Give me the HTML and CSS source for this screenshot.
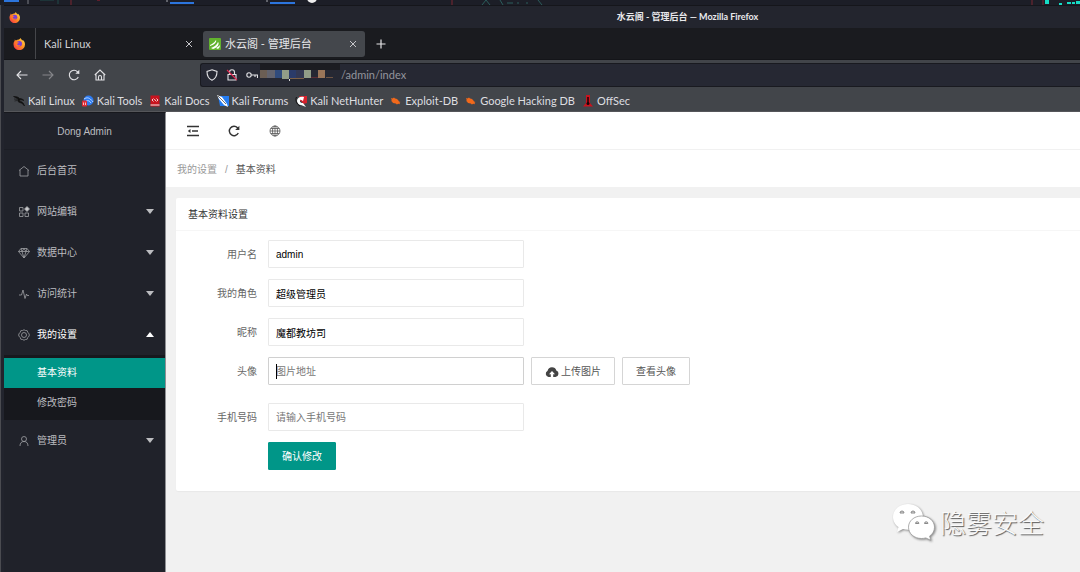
FILE: index.html
```html
<!DOCTYPE html>
<html lang="zh">
<head>
<meta charset="utf-8">
<title>水云阁 - 管理后台</title>
<link rel="stylesheet" href="styles.css">
</head>
<body>
<svg width="0" height="0" class="defs">
  <defs>
    <linearGradient id="fox" x1="1" y1="0" x2="0" y2="1">
      <stop offset="0" stop-color="#ffe14a"/>
      <stop offset=".5" stop-color="#ff8a22"/>
      <stop offset="1" stop-color="#f5264f"/>
    </linearGradient>
    <symbol id="firefox" viewBox="0 0 12 12">
      <path d="M6 1.6C7 .8 7 .5 7.4 0c.5 1.400 1.600 1.700 2.400 2.800 0-.5 0-.7-.2-1.100C11.200 2.900 12 4.600 12 6.400A5.700 5.700 0 0 1 .5 6.400C.5 4.600 1 3.600 1.600 2.900l.2-1.300 1 1C3.900 1.900 5 1.600 6 1.600z" fill="url(#fox)"/>
      <circle cx="6.300" cy="5.800" r="2.700" fill="#7a3fd6"/>
      <path d="M2.500 4.200c1.200-.6 2.300.1 3.500.2-.3.9-1.600.9-1.800 1.600 0 1 1.200 1.900 3.300.7-.5 1.600-2.500 2.200-4 1.200-1-.8-1.400-2.200-1-3.700z" fill="#ff7a2a"/>
    </symbol>
    <symbol id="bug" viewBox="0 0 12 12">
      <path d="M1 3l1.500.5L4 2.500l1 1C7 3.500 8.500 5 9 6.500l1.500.5-1 .8.5 1.400-1.800-.5-1.300.8L5.800 8.500C3.500 8.500 2.300 7.500 2 6.500L1 6l.8-.8z" fill="#f2691b"/>
    </symbol>
    <symbol id="close" viewBox="0 0 8 8"><path d="M1 1l6 6M7 1L1 7" stroke="#c6c6ca" fill="none"/></symbol>
  </defs>
</svg>

<div class="desktop">
  <svg class="panel" width="1080" height="5">
    <rect x="4" width="15" height="2" fill="#2c75dd"/>
    <path d="M28 0v4" stroke="#7a7d84"/>
    <path d="M58 0v4M40 0h14" stroke="#1e4a4b"/>
    <path d="M71 0v5M452 0v5M1032 0v5M1043 0v5" stroke="#4b222c" stroke-width="2"/>
    <path d="M97 0h3" stroke="#a21f30"/>
    <path d="M167 0v2M267 0v2" stroke="#a5a7ad"/>
    <path d="M170 3h24M270 3h25" stroke="#2c75dd" stroke-width="2"/>
    <circle cx="312" cy="-2" r="5" fill="#eee"/>
    <path d="M482 5l4-5 4 5M500 0l3 5M507 3h6M517 3h2M526 3h2M538 0l4 5" stroke="#2b5c5c" fill="none"/>
    <path d="M1045 0h4v4h-4zM1059 3h3v2h-3zM1067 2h4v2h-4zM1072 2h3v2h-3zM1076 1h4v3h-4z" fill="#16dcc5"/>
  </svg>

  <div class="window">
    <header class="titlebar">
      <svg width="11" height="11"><use href="#firefox"/></svg>
      <span class="window-title">水云阁 - 管理后台 — Mozilla Firefox</span>
    </header>

    <div class="tabs">
      <div class="tab-pinned"><svg width="12" height="12"><use href="#firefox"/></svg></div>
      <div class="tab">
        <span>Kali Linux</span>
        <button class="tab-close" aria-label="Close"><svg width="8" height="8"><use href="#close"/></svg></button>
      </div>
      <div class="tab active">
        <svg width="12" height="12" viewBox="0 0 12 12"><rect width="12" height="12" rx="1" fill="#62b32e"/><path d="M1 7c2-1 4-2 6-5 1 2-2 5-6 6zM2 10c3-1 6-3 7-6 2 2-1 6-5 7zM7 10c2-1 3-2 4-3 0 2-1 3-2 4z" fill="#fff"/></svg>
        <span>水云阁 - 管理后台</span>
        <button class="tab-close" aria-label="Close"><svg width="8" height="8"><use href="#close"/></svg></button>
      </div>
      <button class="tab-new" aria-label="New tab"><svg width="10" height="10" viewBox="0 0 10 10"><path d="M5 .5v9M.5 5h9" stroke="#e6e6e8" stroke-width="1.200"/></svg></button>
    </div>

    <div class="navbar">
      <button class="nav-btn" aria-label="Back"><svg width="12" height="12" viewBox="0 0 12 12"><path d="M11.500 6H1M5 2L1 6l4 4"/></svg></button>
      <button class="nav-btn dim" aria-label="Forward"><svg width="12" height="12" viewBox="0 0 12 12"><path d="M.5 6H11M7 2l4 4-4 4"/></svg></button>
      <button class="nav-btn" aria-label="Reload"><svg width="12" height="12" viewBox="0 0 12 12"><path d="M10.300 8A4.700 4.700 0 1 1 9.500 2.800L11 4.500"/><path d="M11.300 .8v4h-4z" fill="#e2e2e5" stroke="none"/></svg></button>
      <button class="nav-btn" aria-label="Home"><svg width="12" height="12" viewBox="0 0 12 12"><path d="M.8 6L6 1l5.200 5M2 5.500V11h8V5.500M4.500 11V8a1.500 1.500 0 0 1 3 0v3"/></svg></button>
      <div class="urlbar">
        <svg width="12" height="12" viewBox="0 0 12 12"><path d="M6 .8L11 2.500C11 7 9 10 6 11.300 3 10 1 7 1 2.500z"/></svg>
        <svg width="12" height="12" viewBox="0 0 12 12"><path d="M2 5.500h8V11H2zM3.500 5.500V3.300a2.500 2.500 0 0 1 5 0v2.200"/><path d="M1 1l10 10" stroke="#e22850"/></svg>
        <svg width="12" height="12" viewBox="0 0 12 12"><circle cx="3" cy="6" r="2.200"/><path d="M5.200 6H12M9 6v2M11.500 6v3"/></svg>
        <svg class="mosaic" width="80" height="22" viewBox="0 0 80 22">
          <path d="M0 0h80v6H0z" fill="#1b1c21" stroke="none"/>
          <g stroke="none">
            <rect y="6" width="7" height="8" fill="#6b5e54"/>
            <rect x="7" y="6" width="8" height="8" fill="#62636e"/>
            <rect x="15" y="6" width="7" height="8" fill="#304b7c"/>
            <rect x="22" y="6" width="7" height="9" fill="#929d88"/>
            <rect x="29" y="6" width="7" height="8" fill="#2b3b69"/>
            <rect x="36" y="6" width="8" height="8" fill="#333853"/>
            <rect x="44" y="6" width="7" height="8" fill="#929d88"/>
            <rect x="51" y="13" width="7" height="1" fill="#5c2d35"/>
            <rect x="58" y="6" width="7" height="8" fill="#9b7659"/>
            <rect x="66" y="13" width="7" height="1" fill="#6e5443"/>
            <rect x="30" y="14" width="14" height="1" fill="#7d6046"/>
            <rect x="29" y="15" width="1" height="2" fill="#ddd"/>
          </g>
        </svg>
        <input class="url" type="text" aria-label="Address" value="/admin/index">
      </div>
    </div>

    <nav class="bookmarks">
      <a href="#"><svg width="12" height="12" viewBox="0 0 12 12"><path d="M.5 1.500c3 0 5 .5 6 2 2 0 3 .5 4.500 2L9 5c-2-.5-3 .3-2 1.200C9 6.500 10.500 7.500 11.500 11 9.500 8 8 8 6 7.300 4.500 6.500 4.500 5 5 4 3.500 3 2 2.500.5 1.500zM1 4l3 .3M1.500 6L4 5.500" fill="#111" stroke="#111" stroke-width=".6"/></svg>Kali Linux</a>
      <a href="#"><svg width="12" height="12" viewBox="0 0 12 12"><circle cx="6.500" cy="5.500" r="5" fill="#2e7bf0"/><path d="M2 4c3-2 5-1 6 0s2 1 3 3M4 6c2-1 4 0 5 2" stroke="#b9d6ff" fill="none"/><rect y="5.500" width="5" height="6" rx="1" fill="#e02b35"/><path d="M1.500 7.500v2.500M3.500 7.500v2.500" stroke="#fff" stroke-width=".7"/></svg>Kali Tools</a>
      <a href="#"><svg width="12" height="12" viewBox="0 0 12 12"><path d="M1.500 .5h9v11h-9z" fill="#c9131e"/><path d="M1.500 10h9" stroke="#eee"/><path d="M4.500 3.500L3 5l1.500 1.500M7.500 3.500L9 5 7.500 6.500M5.300 4l1.500 2" stroke="#fff" fill="none" stroke-width=".8"/></svg>Kali Docs</a>
      <a href="#"><svg width="12" height="12" viewBox="0 0 12 12"><path d="M1 1h11v10H3z" fill="#257df2"/><path d="M0 0l5 2 5 7 1 3-4-2-5-6z" fill="#fff"/><path d="M1 1l8 8" stroke="#333" stroke-width=".7"/></svg>Kali Forums</a>
      <a href="#"><svg width="12" height="12" viewBox="0 0 12 12"><path d="M4 1h8v7l-4 1z" fill="#d8222d"/><path d="M9 2C5 1 2 3 2 6c0 2 2 4 4 4l5 2-3-4C5 8 4 6 6 5l2 1z" fill="#fff"/><path d="M1.500 2c-1.500 3 0 7 3.500 9" stroke="#111" fill="none"/><path d="M5 5l3 2" stroke="#d8222d"/></svg>Kali NetHunter</a>
      <a href="#"><svg width="12" height="12"><use href="#bug"/></svg>Exploit-DB</a>
      <a href="#"><svg width="12" height="12"><use href="#bug"/></svg>Google Hacking DB</a>
      <a href="#"><svg width="12" height="12" viewBox="0 0 12 12"><path d="M4 0h4v8l3 3.500H1L4 8z" fill="#c9131e"/><path d="M6 2v6" stroke="#180508" stroke-width="1.500"/><circle cx="6" cy="8.500" r="1.500" fill="#180508"/></svg>OffSec</a>
    </nav>

    <div class="page">
      <aside class="sidebar">
        <div class="logo">Dong Admin</div>
        <a class="menu-item" href="#"><svg width="12" height="12" viewBox="0 0 12 12"><path d="M1 5.500L6 1.500l5 4M2 5v6h8V5"/></svg>后台首页</a>
        <a class="menu-item" href="#"><svg width="12" height="12" viewBox="0 0 12 12"><path d="M1.500 1.500h3.500v3.500H1.500zM1.500 7h3.500v3.500H1.500zM7 7h3.500v3.500H7z"/><path d="M9 .5L11.500 3 9 5.500 6.500 3z" fill="#c9cacc"/></svg>网站编辑<i class="arrow"></i></a>
        <a class="menu-item" href="#"><svg width="12" height="12" viewBox="0 0 12 12"><path d="M3 1.500h6l2.500 3L6 11 .5 4.500zM.5 4.500h11M3 1.500l1 3L6 11l2-6.500 1-3M4 4.500l2-3 2 3"/></svg>数据中心<i class="arrow"></i></a>
        <a class="menu-item" href="#"><svg width="12" height="12" viewBox="0 0 12 12"><path d="M1 7h2.500L5 2l2 8.500L8.500 6l.7 1.500H11"/></svg>访问统计<i class="arrow"></i></a>
        <a class="menu-item open" href="#"><svg width="12" height="12" viewBox="0 0 12 12"><path d="M4.500 1.500L6 .8l1.500.7 1.700.2.600 1.600L11.200 5v2l-1.400 1.500-.6 1.700-1.700.3-1.500.7-1.500-.7-1.700-.3-.6-1.700L.8 7V5l1.400-1.700.6-1.600z"/><circle cx="6" cy="6" r="2.500"/></svg>我的设置<i class="arrow"></i></a>
        <div class="submenu">
          <a class="current" href="#">基本资料</a>
          <a href="#">修改密码</a>
        </div>
        <a class="menu-item" href="#"><svg width="12" height="12" viewBox="0 0 12 12"><circle cx="6" cy="4" r="2.500"/><path d="M2 11c0-3 1.500-4.500 4-4.500S10 8 10 11"/></svg>管理员<i class="arrow"></i></a>
      </aside>

      <main class="main">
        <div class="toolbar">
          <button aria-label="收起菜单"><svg width="12" height="12" viewBox="0 0 12 12"><path d="M0 1.500h12M5 6h6M0 10.500h12"/><path d="M3.500 4v4L.8 6z" fill="#333" stroke="none"/></svg></button>
          <button aria-label="刷新"><svg width="12" height="12" viewBox="0 0 12 12"><path d="M10.300 8A4.700 4.700 0 1 1 9.500 2.800L10.500 4"/><path d="M11.400 .8v4.200H7.200z" fill="#333" stroke="none"/></svg></button>
          <button aria-label="语言"><svg width="12" height="12" viewBox="0 0 12 12" class="thin"><circle cx="6" cy="6" r="5"/><ellipse cx="6" cy="6" rx="2.500" ry="5"/><path d="M6 1v10M1 6h10M1.800 3.500h8.400M1.800 8.500h8.400"/></svg></button>
        </div>
        <div class="breadcrumb"><a href="#">我的设置</a><span>/</span><b>基本资料</b></div>

        <section class="card">
          <h1>基本资料设置</h1>
          <form class="form">
            <div class="row">
              <label for="username">用户名</label>
              <input id="username" type="text" value="admin">
            </div>
            <div class="row">
              <label for="role">我的角色</label>
              <input id="role" type="text" value="超级管理员">
            </div>
            <div class="row">
              <label for="nickname">昵称</label>
              <input id="nickname" type="text" value="魔都教坊司">
            </div>
            <div class="row avatar">
              <label for="avatar">头像</label>
              <div class="field"><input id="avatar" class="focused" type="text" placeholder="图片地址"><i class="caret"></i></div>
              <button type="button" class="btn"><svg width="14" height="10" viewBox="0 0 14 10"><path d="M3.500 10A3.300 3.300 0 0 1 2.600 3.800 4.500 4.500 0 0 1 11.300 3.600 3.300 3.300 0 0 1 10.500 10H8.200V7.300H10L7 4 4 7.300h1.800V10z" fill="#444"/></svg>上传图片</button>
              <button type="button" class="btn">查看头像</button>
            </div>
            <div class="row">
              <label for="phone">手机号码</label>
              <input id="phone" type="text" placeholder="请输入手机号码">
            </div>
            <div class="row submit">
              <button type="submit" class="btn primary">确认修改</button>
            </div>
          </form>
        </section>
      </main>
    </div>
  </div>
</div>

<div class="watermark">
  <svg width="44" height="38" viewBox="0 0 44 38">
    <path d="M16 1C7.500 1 1 6.800 1 14c0 4.300 2.200 8 5.500 10L5 29l6-3c1.500.5 3.300.8 5 .8 8.500 0 15-5.700 15-12.800S24.500 1 16 1z"/>
    <path class="front" d="M29.500 13C22 13 16.500 18 16.500 24.200s5.500 11.300 13 11.300c1.500 0 3-.2 4.300-.6l5 2.400-1.200-4.200c3-2 4.900-5.200 4.900-8.900C42.500 18 37 13 29.500 13z"/>
    <path class="eye" d="M8 10a2 2 0 0 1 4 0zM19 10a2 2 0 0 1 4 0zM23.500 20.500a1.700 1.700 0 0 1 3.400 0zM32.500 20.500a1.700 1.700 0 0 1 3.400 0z"/>
  </svg>
  <span>隐雾安全</span>
</div>
</body>
</html>
```
FILE: styles.css
```css
* {
  box-sizing: border-box;
}

body {
  margin: 0;
  min-height: 100vh;
  overflow: hidden;
  font: 10px/16px "Liberation Sans", "Noto Sans CJK SC", sans-serif;
  color: #333;
  background: #22242d;
}

a {
  color: inherit;
  text-decoration: none;
}

button,
input {
  font: inherit;
  color: inherit;
  margin: 0;
}

button {
  border: 0;
  padding: 0;
  background: none;
}

svg {
  flex: none;
}

.defs {
  position: absolute;
}

/* desktop and browser window */
.desktop {
  display: flex;
  flex-direction: column;
  min-height: 100vh;
}

.panel {
  background: #1c1e27;
}

.window {
  flex: 1;
  display: flex;
  flex-direction: column;
  border-left: 1px solid #4a4b50;
  padding-left: 3px;
  font-family: Lato, "Noto Sans CJK SC", sans-serif;
}

.titlebar {
  display: flex;
  align-items: center;
  height: 23px;
  padding-left: 5px;
  border-top: 1px solid #15161b;
  background: #23252e;
}

.window-title {
  flex: 1;
  padding-left: 275px;
  text-align: center;
  font-size: 9px;
  font-weight: 700;
  color: #e9e9ec;
}

.tabs {
  display: flex;
  align-items: center;
  height: 32px;
  font-size: 11px;
  color: #d0d0d4;
  background: #1a1b1f;
  border-bottom: 1px solid #141519;
}

.tab-pinned {
  display: flex;
  align-items: center;
  justify-content: center;
  width: 32px;
  height: 100%;
  padding-right: 1px;
  border-right: 1px solid #45464a;
}

.tab {
  display: flex;
  align-items: center;
  gap: 4px;
  width: 167px;
  height: 26px;
  padding: 0 10px 0 8px;
}

.tab.active {
  width: 162px;
  padding: 0 8px 0 6px;
  color: #e6e6e9;
  background: #44474c;
  border-radius: 3px;
}

.tab-close {
  display: flex;
  margin-left: auto;
}

.tab-new {
  display: flex;
  margin-left: 11px;
}

.navbar {
  display: flex;
  align-items: center;
  height: 30px;
  padding-left: 5px;
  background: #42454a;
}

.nav-btn {
  display: flex;
  justify-content: center;
  width: 26px;
}

.nav-btn svg,
.urlbar svg {
  fill: none;
  stroke: #e2e2e5;
  stroke-width: 1.1;
}

.nav-btn.dim svg {
  stroke: #85868a;
}

.urlbar {
  display: flex;
  flex: 1;
  align-items: center;
  gap: 8px;
  height: 24px;
  margin-left: 87px;
  padding-left: 5px;
  border: 1px solid #191a20;
  border-right: 0;
  border-radius: 3px 0 0 3px;
  background: #262833;
}

.urlbar .mosaic {
  margin-left: -6px;
}

.url {
  flex: 1;
  min-width: 0;
  margin-left: -7px;
  padding: 0;
  border: 0;
  font-size: 11px;
  color: #94959d;
  background: none;
}

.bookmarks {
  display: flex;
  align-items: center;
  gap: 7px;
  height: 22px;
  padding-left: 9px;
  font-size: 11px;
  color: #dedee0;
  background: #42454a;
  border-bottom: 1px solid #55565a;
}

.bookmarks a {
  display: flex;
  align-items: center;
  gap: 3px;
  white-space: nowrap;
}

/* admin page */
.page {
  flex: 1;
  display: flex;
  font-family: "Liberation Sans", "Noto Sans CJK SC", sans-serif;
}

.sidebar {
  flex: none;
  width: 162px;
  border-top: 1px solid #17181d;
  border-right: 1px solid #8f9094;
  color: #bcbdc0;
  background: #20222a;
}

.logo {
  height: 37px;
  border-bottom: 1px solid #1c1e25;
  line-height: 38px;
  text-align: center;
}

.menu-item {
  display: flex;
  align-items: center;
  gap: 7px;
  height: 41px;
  padding: 0 11px 0 14px;
}

.menu-item svg {
  fill: none;
  stroke: #a0a1a5;
  stroke-width: .8;
}

.menu-item.open {
  color: #fff;
}

.arrow {
  margin-left: auto;
  border: solid transparent;
  border-width: 5px 4px 0;
  border-top-color: #bcbdc0;
}

.open .arrow {
  border-width: 0 4px 5px;
  border-bottom-color: #fff;
}

.submenu {
  padding: 3px 0 2px;
  background: #17181d;
}

.submenu a {
  display: block;
  padding-left: 33px;
  line-height: 30px;
}

.submenu .current {
  color: #fff;
  background: #009688;
}

.main {
  flex: 1;
  min-width: 0;
  background: #f1f1f1;
}

.toolbar {
  display: flex;
  gap: 29px;
  height: 38px;
  padding-left: 21px;
  border-bottom: 1px solid #f1f1f1;
  background: #fff;
}

.toolbar svg {
  display: block;
  fill: none;
  stroke: #333;
  stroke-width: 1.4;
}

.toolbar svg.thin {
  stroke: #555;
  stroke-width: .8;
}

.breadcrumb {
  display: flex;
  align-items: center;
  gap: 8px;
  height: 37px;
  padding: 2px 0 0 11px;
  color: #999;
  background: #fff;
}

.breadcrumb b {
  font-weight: 400;
  color: #555;
}

.card {
  margin: 11px 0 0 10px;
  border-radius: 2px 0 0 2px;
  background: #fff;
  box-shadow: 0 1px 1px #e8e8e8;
}

.card h1 {
  margin: 0;
  padding: 2px 0 0 12px;
  border-bottom: 1px solid #f6f6f6;
  font-size: 10px;
  font-weight: 400;
  line-height: 30px;
}

.form {
  display: flex;
  flex-direction: column;
  gap: 11px;
  padding: 9px 0 21px;
}

.row {
  display: flex;
  align-items: center;
}

.row label {
  width: 81px;
  margin-right: 11px;
  padding-top: 2px;
  text-align: right;
  color: #666;
}

.row input {
  display: block;
  width: 256px;
  height: 28px;
  padding: 0 7px;
  border: 1px solid #e9e9e9;
  border-radius: 1px;
  color: #000;
  background: #fff;
}

.row input.focused {
  border-color: #d0d0d0;
}

.row input::placeholder {
  color: #777;
}

.avatar {
  padding-bottom: 7px;
}

.field {
  position: relative;
}

.caret {
  position: absolute;
  top: 7px;
  left: 8px;
  width: 1px;
  height: 15px;
  background: #000;
}

.btn {
  display: flex;
  align-items: center;
  gap: 2px;
  height: 28px;
  margin-left: 7px;
  padding: 2px 13px 0;
  border: 1px solid #d5d5d5;
  border-radius: 1px;
  color: #555;
  background: #fff;
}

.submit {
  padding-left: 92px;
}

.btn.primary {
  margin-left: 0;
  border-color: #009688;
  color: #fff;
  background: #009688;
}

.watermark {
  position: absolute;
  right: 36px;
  bottom: 31px;
  display: flex;
  align-items: center;
  gap: 4px;
  font: 26px/38px "Noto Sans CJK SC", sans-serif;
  font-weight: 300;
  color: #fafafa;
  text-shadow: 1px 1px 1px #555;
}

.watermark svg {
  fill: #fff;
  filter: drop-shadow(1px 1px 1px #888);
}

.watermark .front {
  stroke: #999;
  stroke-width: .8;
}

.watermark .eye {
  fill: #ddd;
  stroke: #888;
}
```
